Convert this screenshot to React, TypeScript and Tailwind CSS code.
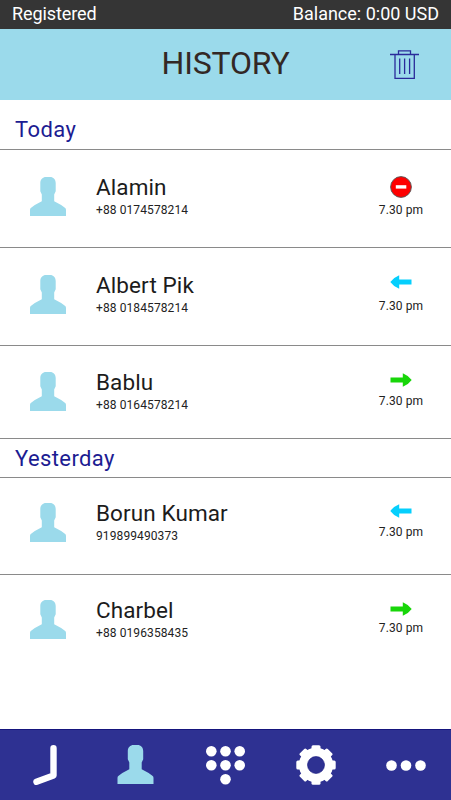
import clsx from 'clsx';

type CallType = 'missed' | 'incoming' | 'outgoing';

interface Call {
  name: string;
  phone: string;
  time: string;
  type: CallType;
  rowClass: string;
  statusClass: string;
  timeClass: string;
}

interface CallGroup {
  title: string;
  titleClass: string;
  calls: Call[];
}

const groups: CallGroup[] = [
  {
    title: 'Today',
    titleClass: 'h-[50px] pt-[10px]',
    calls: [
      {
        name: 'Alamin',
        phone: '+88 0174578214',
        time: '7.30 pm',
        type: 'missed',
        rowClass: 'h-[98px] pt-[26px] border-b',
        statusClass: 'pt-0',
        timeClass: 'mt-[5px]',
      },
      {
        name: 'Albert Pik',
        phone: '+88 0184578214',
        time: '7.30 pm',
        type: 'incoming',
        rowClass: 'h-[98px] pt-[26px] border-b',
        statusClass: 'pt-px',
        timeClass: 'mt-[10px]',
      },
      {
        name: 'Bablu',
        phone: '+88 0164578214',
        time: '7.30 pm',
        type: 'outgoing',
        rowClass: 'h-[93px] pt-[25px] border-b',
        statusClass: 'pt-[2px]',
        timeClass: 'mt-[7px]',
      },
    ],
  },
  {
    title: 'Yesterday',
    titleClass: 'h-[39px] pt-px',
    calls: [
      {
        name: 'Borun Kumar',
        phone: '919899490373',
        time: '7.30 pm',
        type: 'incoming',
        rowClass: 'h-[97px] pt-[24px] border-b',
        statusClass: 'pt-[2px]',
        timeClass: 'mt-[7px]',
      },
      {
        name: 'Charbel',
        phone: '+88 0196358435',
        time: '7.30 pm',
        type: 'outgoing',
        rowClass: 'h-[97px] pt-[24px]',
        statusClass: 'pt-[3px]',
        timeClass: 'mt-[5px]',
      },
    ],
  },
];

const PersonIcon = ({ className }: { className?: string }) => (
  <svg viewBox="0 0 36 39" className={className} fill="#9bdaeb">
    <path d="M0 39V33Q0 31.8 .8 31.1Q5 27.4 11.8 24.2V17.4L11 15.8L10.3 14.3V6C10.3 2.4 12.8 0 16 0H20C23.4 0 25.7 2.4 25.7 6V14.3L25 15.8L24.2 17.4V24.2Q31 27.4 35.2 31.1Q36 31.8 36 33V39Z" />
  </svg>
);

const TrashIcon = () => (
  <svg
    viewBox="0 0 29 29"
    className="h-[29px] w-[29px]"
    fill="none"
    stroke="#2a2a9a"
    strokeWidth="1.3"
  >
    <path d="M0 4.5H29M8.5 4.5V.8H20.5V4.5M5 4.5V28.3H24.3V4.5" />
    <path d="M9.7 8.5V24M14.6 8.5V24M19.6 8.5V24" />
  </svg>
);

const StatusIcon = ({ type }: { type: CallType }) => {
  if (type === 'missed') {
    return (
      <svg viewBox="0 0 22 22" className="h-[22px] w-[22px]">
        <circle cx="11" cy="11" r="10.4" fill="#fe0000" stroke="#555" strokeWidth=".9" />
        <rect x="5.8" y="9.2" width="10.5" height="3.4" fill="#fff" />
      </svg>
    );
  }

  return (
    <svg
      viewBox="0 0 22 14"
      className={clsx('h-[14px] w-[22px]', type === 'outgoing' && 'rotate-180')}
      fill={type === 'incoming' ? '#05cffd' : '#18d609'}
    >
      <path d="M.3 7Q3.5 2.5 9.2 .2V4.6H21.5V9.4H9.2V13.8Q3.5 11.5 .3 7Z" />
    </svg>
  );
};

const CallRow = ({ call }: { call: Call }) => (
  <li className={clsx('flex items-start border-[#8a8a8a] pl-[30px]', call.rowClass)}>
    <PersonIcon className="mt-px h-[39px] w-[36px] shrink-0" />
    <div className="ml-[30px] flex-1 whitespace-nowrap">
      <p className="text-[22.5px] leading-[22px] tracking-[0.1px] text-[#1c1c1c]">
        {call.name}
      </p>
      <p className="mt-[5px] text-[12px] leading-[14px] tracking-[0.1px] text-[#222]">
        {call.phone}
      </p>
    </div>
    <div className={clsx('flex w-[100px] flex-col items-center', call.statusClass)}>
      <StatusIcon type={call.type} />
      <p className={clsx('text-[12px] leading-[14px] tracking-[0.1px] text-[#222]', call.timeClass)}>
        {call.time}
      </p>
    </div>
  </li>
);

const ClockIcon = () => (
  <svg viewBox="0 0 24 40" className="h-[40px] w-[24px]">
    <path
      d="M20.5 3.3V30.5L3.5 36.8"
      fill="none"
      stroke="#fff"
      strokeWidth="6.4"
      strokeLinecap="round"
      strokeLinejoin="round"
    />
  </svg>
);

const keypadDots = [
  [5.3, 5.3],
  [19.5, 5.3],
  [33.7, 5.3],
  [5.3, 19.3],
  [19.5, 19.3],
  [33.7, 19.3],
  [19.5, 33.2],
];

const KeypadIcon = () => (
  <svg viewBox="0 0 39 39" className="h-[39px] w-[39px]" fill="#fff">
    {keypadDots.map(([cx, cy]) => (
      <circle key={`${cx}-${cy}`} cx={cx} cy={cy} r="5.3" />
    ))}
  </svg>
);

const GearIcon = () => (
  <svg viewBox="0 0 40 40" className="h-[40px] w-[40px]" fill="#fff">
    {[0, 45, 90, 135].map((angle) => (
      <rect
        key={angle}
        x="15.5"
        y=".3"
        width="9"
        height="39.4"
        rx="1.5"
        transform={`rotate(${angle} 20 20)`}
      />
    ))}
    <circle cx="20" cy="20" r="17.2" />
    <circle cx="20" cy="20" r="8.5" fill="#2e3192" stroke="#15157d" strokeWidth=".6" />
  </svg>
);

const MoreIcon = () => (
  <svg viewBox="0 0 40 11" className="h-[11px] w-[40px]" fill="#fff">
    <circle cx="5.5" cy="5.5" r="5.3" />
    <circle cx="20" cy="5.5" r="5.3" />
    <circle cx="34.5" cy="5.5" r="5.3" />
  </svg>
);

const BottomNav = () => (
  <nav className="grid h-[71px] shrink-0 grid-cols-5 border-t border-[#15157d] bg-[#2e3192]">
    <button className="flex items-center justify-center">
      <ClockIcon />
    </button>
    <button className="flex items-center justify-center pb-px">
      <PersonIcon className="h-[39px] w-[37px]" />
    </button>
    <button className="flex items-center justify-center">
      <KeypadIcon />
    </button>
    <button className="flex items-center justify-center pb-px">
      <GearIcon />
    </button>
    <button className="flex items-center justify-center">
      <MoreIcon />
    </button>
  </nav>
);

const App = () => {
  return (
    <div className="flex h-[800px] w-[451px] flex-col overflow-hidden bg-white font-['Roboto',sans-serif]">
      <div className="flex h-[29px] shrink-0 items-center justify-between bg-[#353535] px-3 pb-[2px] text-[18px] text-white">
        <span className="tracking-[-0.1px]">Registered</span>
        <span>Balance: 0:00 USD</span>
      </div>

      <header className="grid h-[71px] shrink-0 grid-cols-[1fr_auto_1fr] items-center bg-[#9bdaeb]">
        <h1 className="col-start-2 pb-[3px] text-[32px] leading-none tracking-[-0.2px] text-[#332825]">
          HISTORY
        </h1>
        <button className="mr-[32px] justify-self-end">
          <TrashIcon />
        </button>
      </header>

      <main className="flex-1">
        {groups.map((group) => (
          <section key={group.title}>
            <h2
              className={clsx(
                'flex items-center border-b border-[#8a8a8a] pl-[15px] text-[22px] tracking-[0.4px] text-[#1c1c92]',
                group.titleClass
              )}
            >
              {group.title}
            </h2>
            <ul>
              {group.calls.map((call) => (
                <CallRow key={call.name} call={call} />
              ))}
            </ul>
          </section>
        ))}
      </main>

      <BottomNav />
    </div>
  );
};

export default App;
